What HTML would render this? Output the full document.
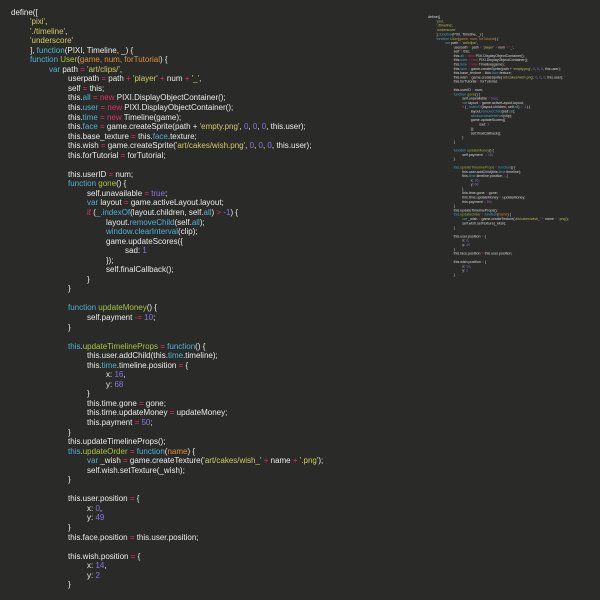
<!DOCTYPE html>
<html><head><meta charset="utf-8"><style>
html,body{margin:0;padding:0;width:600px;height:600px;overflow:hidden;background:#2a2a29;}
.code{position:absolute;font-family:"Liberation Sans",Arial,sans-serif;font-size:8px;line-height:9.55px;color:#ececec;white-space:normal;}
.code div{height:9.55px;white-space:pre;}
#main{left:11px;top:7.5px;}
#mini{left:428px;top:14.5px;transform:scale(0.45);transform-origin:0 0;opacity:0.85;}
.i1{padding-left:19px}.i2{padding-left:38px}.i3{padding-left:57px}.i4{padding-left:76px}.i5{padding-left:95px}.i6{padding-left:114px}
.s{color:#cfcf62}.k{color:#4fb3d3}.f{color:#a9c63c}.o{color:#e0306a}.n{color:#8c74e6}.p{color:#e3913a}.c{color:#4fb3d3}
</style></head><body>
<div class="code" id="main"><div>define([</div><div class="i1"><span class="s">'pixi'</span>,</div><div class="i1"><span class="s">'./timeline'</span>,</div><div class="i1"><span class="s">'underscore'</span></div><div class="i1">], <span class="k">function</span>(PIXI, Timeline, _) {</div><div class="i1"><span class="k">function</span> <span class="f">User</span>(<span class="p">game, num, forTutorial</span>) {</div><div class="i2"><span class="k">var</span> path <span class="o">=</span> <span class="s">'art/clips/'</span>,</div><div class="i3">userpath <span class="o">=</span> path <span class="o">+</span> <span class="s">'player'</span> <span class="o">+</span> num <span class="o">+</span> <span class="s">'_'</span>,</div><div class="i3">self <span class="o">=</span> this;</div><div class="i3">this.<span class="c">all</span> <span class="o">=</span> <span class="o">new</span> PIXI.DisplayObjectContainer();</div><div class="i3">this.<span class="c">user</span> <span class="o">=</span> <span class="o">new</span> PIXI.DisplayObjectContainer();</div><div class="i3">this.<span class="c">time</span> <span class="o">=</span> <span class="o">new</span> Timeline(game);</div><div class="i3">this.<span class="c">face</span> <span class="o">=</span> game.createSprite(path + <span class="s">'empty.png'</span>, <span class="n">0</span>, <span class="n">0</span>, <span class="n">0</span>, this.user);</div><div class="i3">this.base_texture <span class="o">=</span> this.<span class="c">face</span>.texture;</div><div class="i3">this.wish <span class="o">=</span> game.createSprite(<span class="s">'art/cakes/wish.png'</span>, <span class="n">0</span>, <span class="n">0</span>, <span class="n">0</span>, this.user);</div><div class="i3">this.forTutorial <span class="o">=</span> forTutorial;</div><div></div><div class="i3">this.userID <span class="o">=</span> num;</div><div class="i3"><span class="k">function</span> <span class="f">gone</span>() {</div><div class="i4">self.unavailable <span class="o">=</span> <span class="n">true</span>;</div><div class="i4"><span class="k">var</span> layout <span class="o">=</span> game.activeLayout.layout;</div><div class="i4"><span class="o">if</span> (<span class="c">_.indexOf</span>(layout.children, self.<span class="c">all</span>) <span class="o">&gt;</span> <span class="n">-1</span>) {</div><div class="i5">layout.<span class="c">removeChild</span>(self.<span class="c">all</span>);</div><div class="i5"><span class="c">window.clearInterval</span>(clip);</div><div class="i5">game.updateScores({</div><div class="i6">sad: <span class="n">1</span></div><div class="i5">});</div><div class="i5">self.finalCallback();</div><div class="i4">}</div><div class="i3">}</div><div></div><div class="i3"><span class="k">function</span> <span class="f">updateMoney</span>() {</div><div class="i4">self.payment <span class="o">-=</span> <span class="n">10</span>;</div><div class="i3">}</div><div></div><div class="i3"><span class="c">this</span>.<span class="f">updateTimelineProps</span> <span class="o">=</span> <span class="k">function</span>() {</div><div class="i4">this.user.addChild(this.<span class="c">time</span>.timeline);</div><div class="i4">this.<span class="c">time</span>.timeline.position <span class="o">=</span> {</div><div class="i5">x: <span class="n">16</span>,</div><div class="i5">y: <span class="n">68</span></div><div class="i4">}</div><div class="i4">this.time.gone <span class="o">=</span> gone;</div><div class="i4">this.time.updateMoney <span class="o">=</span> updateMoney;</div><div class="i4">this.payment <span class="o">=</span> <span class="n">50</span>;</div><div class="i3">}</div><div class="i3">this.updateTimelineProps();</div><div class="i3"><span class="c">this</span>.<span class="f">updateOrder</span> <span class="o">=</span> <span class="k">function</span>(<span class="p">name</span>) {</div><div class="i4"><span class="k">var</span> _wish <span class="o">=</span> game.createTexture(<span class="s">'art/cakes/wish_'</span> <span class="o">+</span> name <span class="o">+</span> <span class="s">'.png'</span>);</div><div class="i4">self.wish.setTexture(_wish);</div><div class="i3">}</div><div></div><div class="i3">this.user.position <span class="o">=</span> {</div><div class="i4">x: <span class="n">0</span>,</div><div class="i4">y: <span class="n">49</span></div><div class="i3">}</div><div class="i3">this.face.position <span class="o">=</span> this.user.position;</div><div></div><div class="i3">this.wish.position <span class="o">=</span> {</div><div class="i4">x: <span class="n">14</span>,</div><div class="i4">y: <span class="n">2</span></div><div class="i3">}</div></div>

<div class="code" id="mini"><div>define([</div><div class="i1"><span class="s">'pixi'</span>,</div><div class="i1"><span class="s">'./timeline'</span>,</div><div class="i1"><span class="s">'underscore'</span></div><div class="i1">], <span class="k">function</span>(PIXI, Timeline, _) {</div><div class="i1"><span class="k">function</span> <span class="f">User</span>(<span class="p">game, num, forTutorial</span>) {</div><div class="i2"><span class="k">var</span> path <span class="o">=</span> <span class="s">'art/clips/'</span>,</div><div class="i3">userpath <span class="o">=</span> path <span class="o">+</span> <span class="s">'player'</span> <span class="o">+</span> num <span class="o">+</span> <span class="s">'_'</span>,</div><div class="i3">self <span class="o">=</span> this;</div><div class="i3">this.<span class="c">all</span> <span class="o">=</span> <span class="o">new</span> PIXI.DisplayObjectContainer();</div><div class="i3">this.<span class="c">user</span> <span class="o">=</span> <span class="o">new</span> PIXI.DisplayObjectContainer();</div><div class="i3">this.<span class="c">time</span> <span class="o">=</span> <span class="o">new</span> Timeline(game);</div><div class="i3">this.<span class="c">face</span> <span class="o">=</span> game.createSprite(path + <span class="s">'empty.png'</span>, <span class="n">0</span>, <span class="n">0</span>, <span class="n">0</span>, this.user);</div><div class="i3">this.base_texture <span class="o">=</span> this.<span class="c">face</span>.texture;</div><div class="i3">this.wish <span class="o">=</span> game.createSprite(<span class="s">'art/cakes/wish.png'</span>, <span class="n">0</span>, <span class="n">0</span>, <span class="n">0</span>, this.user);</div><div class="i3">this.forTutorial <span class="o">=</span> forTutorial;</div><div></div><div class="i3">this.userID <span class="o">=</span> num;</div><div class="i3"><span class="k">function</span> <span class="f">gone</span>() {</div><div class="i4">self.unavailable <span class="o">=</span> <span class="n">true</span>;</div><div class="i4"><span class="k">var</span> layout <span class="o">=</span> game.activeLayout.layout;</div><div class="i4"><span class="o">if</span> (<span class="c">_.indexOf</span>(layout.children, self.<span class="c">all</span>) <span class="o">&gt;</span> <span class="n">-1</span>) {</div><div class="i5">layout.<span class="c">removeChild</span>(self.<span class="c">all</span>);</div><div class="i5"><span class="c">window.clearInterval</span>(clip);</div><div class="i5">game.updateScores({</div><div class="i6">sad: <span class="n">1</span></div><div class="i5">});</div><div class="i5">self.finalCallback();</div><div class="i4">}</div><div class="i3">}</div><div></div><div class="i3"><span class="k">function</span> <span class="f">updateMoney</span>() {</div><div class="i4">self.payment <span class="o">-=</span> <span class="n">10</span>;</div><div class="i3">}</div><div></div><div class="i3"><span class="c">this</span>.<span class="f">updateTimelineProps</span> <span class="o">=</span> <span class="k">function</span>() {</div><div class="i4">this.user.addChild(this.<span class="c">time</span>.timeline);</div><div class="i4">this.<span class="c">time</span>.timeline.position <span class="o">=</span> {</div><div class="i5">x: <span class="n">16</span>,</div><div class="i5">y: <span class="n">68</span></div><div class="i4">}</div><div class="i4">this.time.gone <span class="o">=</span> gone;</div><div class="i4">this.time.updateMoney <span class="o">=</span> updateMoney;</div><div class="i4">this.payment <span class="o">=</span> <span class="n">50</span>;</div><div class="i3">}</div><div class="i3">this.updateTimelineProps();</div><div class="i3"><span class="c">this</span>.<span class="f">updateOrder</span> <span class="o">=</span> <span class="k">function</span>(<span class="p">name</span>) {</div><div class="i4"><span class="k">var</span> _wish <span class="o">=</span> game.createTexture(<span class="s">'art/cakes/wish_'</span> <span class="o">+</span> name <span class="o">+</span> <span class="s">'.png'</span>);</div><div class="i4">self.wish.setTexture(_wish);</div><div class="i3">}</div><div></div><div class="i3">this.user.position <span class="o">=</span> {</div><div class="i4">x: <span class="n">0</span>,</div><div class="i4">y: <span class="n">49</span></div><div class="i3">}</div><div class="i3">this.face.position <span class="o">=</span> this.user.position;</div><div></div><div class="i3">this.wish.position <span class="o">=</span> {</div><div class="i4">x: <span class="n">14</span>,</div><div class="i4">y: <span class="n">2</span></div><div class="i3">}</div></div>
</body></html>
